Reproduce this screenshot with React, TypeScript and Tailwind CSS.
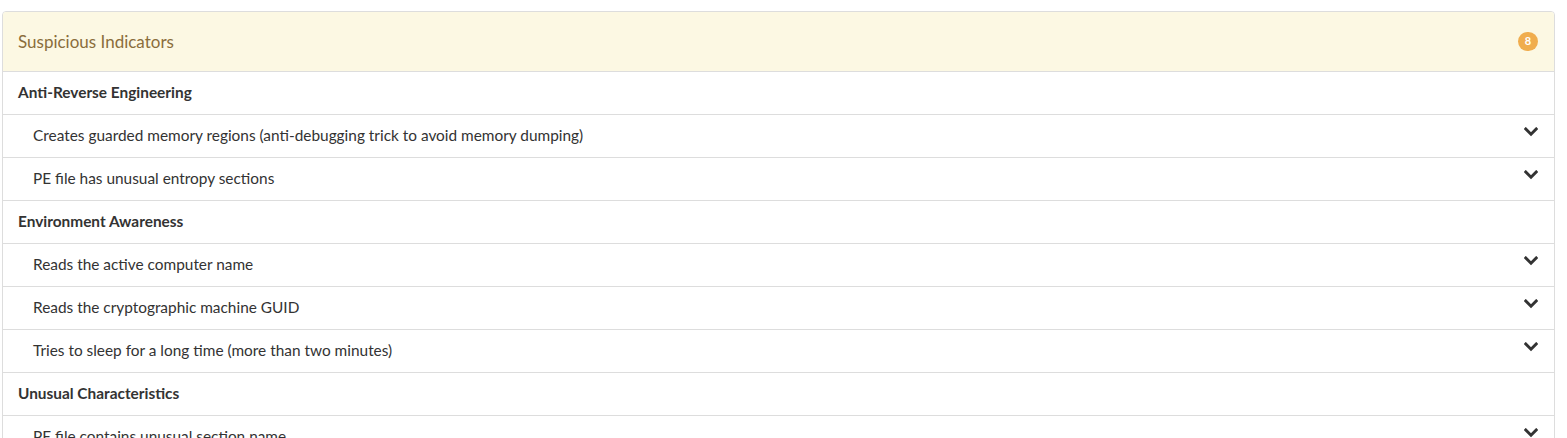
import React from "react";

type Group = { title: string; items: string[] };

const groups: Group[] = [
  {
    title: "Anti-Reverse Engineering",
    items: [
      "Creates guarded memory regions (anti-debugging trick to avoid memory dumping)",
      "PE file has unusual entropy sections",
    ],
  },
  {
    title: "Environment Awareness",
    items: [
      "Reads the active computer name",
      "Reads the cryptographic machine GUID",
      "Tries to sleep for a long time (more than two minutes)",
    ],
  },
  {
    title: "Unusual Characteristics",
    items: ["PE file contains unusual section name"],
  },
];

function Chevron() {
  return (
    <svg viewBox="0 0 14 10" className="w-[14px] h-[10px] text-[#333] -translate-y-[4px]" fill="none">
      <path d="M1.8 2 L7 7.2 L12.2 2" stroke="currentColor" strokeWidth="3" strokeLinecap="square" />
    </svg>
  );
}

export default function App() {
  return (
    <div className="bg-white h-[438px] overflow-hidden pt-[11px] pl-[2px] font-['Lato',sans-serif] text-[15.4px] text-[#333]">
      <div className="w-[1553px] border border-[#ddd] rounded-t-[4px] bg-white">
        {/* panel heading */}
        <div className="h-[60px] bg-[#fcf8e3] text-[#8a6d3b] flex items-center justify-between pl-[15px] pr-[16px] rounded-t-[3px] border-b border-[#ddd]">
          <span className="text-[17px]">Suspicious Indicators</span>
          <span className="w-[20px] h-[19px] rounded-full bg-[#f0ad4e] text-white text-[11px] font-bold flex items-center justify-center">
            8
          </span>
        </div>
        {groups.map((g) => (
          <div key={g.title}>
            <div className="h-[43px] border-b border-[#ddd] flex items-center pl-[15px] font-bold">
              {g.title}
            </div>
            {g.items.map((item) => (
              <div
                key={item}
                className="h-[43px] border-b border-[#ddd] flex items-center justify-between pl-[30px] pr-[16px]"
              >
                <span>{item}</span>
                <Chevron />
              </div>
            ))}
          </div>
        ))}
      </div>
    </div>
  );
}
